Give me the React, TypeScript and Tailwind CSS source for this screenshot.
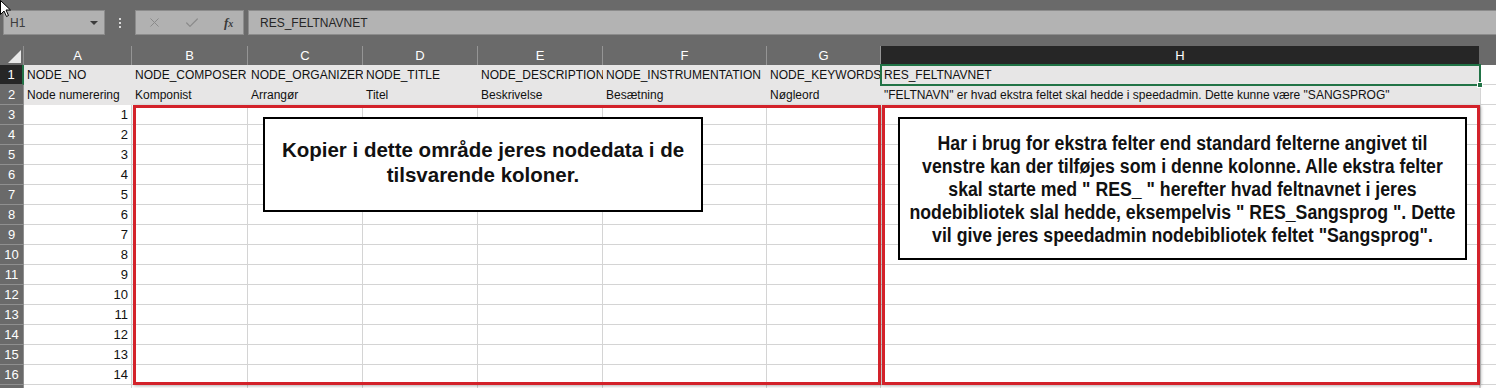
import { X, Check } from "lucide-react";

const cols = [
  { key: "A", w: "w-[108px]" },
  { key: "B", w: "w-[116px]" },
  { key: "C", w: "w-[115px]" },
  { key: "D", w: "w-[115px]" },
  { key: "E", w: "w-[125px]" },
  { key: "F", w: "w-[164px]" },
  { key: "G", w: "w-[114px]" },
  { key: "H", w: "w-[599px]" },
];

const row1 = [
  "NODE_NO",
  "NODE_COMPOSER",
  "NODE_ORGANIZER",
  "NODE_TITLE",
  "NODE_DESCRIPTION",
  "NODE_INSTRUMENTATION",
  "NODE_KEYWORDS",
  "RES_FELTNAVNET",
];

const row2 = [
  "Node numerering",
  "Komponist",
  "Arrangør",
  "Titel",
  "Beskrivelse",
  "Besætning",
  "Nøgleord",
  '"FELTNAVN" er hvad ekstra feltet skal hedde i speedadmin. Dette kunne være "SANGSPROG"',
];

const note = [
  "Har i brug for ekstra felter end standard felterne angivet til",
  "venstre kan der tilføjes som i denne kolonne. Alle ekstra felter",
  'skal starte med " RES_ " herefter hvad feltnavnet i jeres',
  'nodebibliotek slal hedde, eksempelvis " RES_Sangsprog ". Dette',
  'vil give jeres speedadmin nodebibliotek feltet "Sangsprog".',
];

function Toolbar() {
  return (
    <div className="flex h-[46px] items-start bg-[#6a6a6a] pt-[10px]">
      <div className="ml-[3px] flex h-[25px] w-[102px] items-center justify-between border border-[#8c8c8c] bg-[#b1b1b1] pl-[6px] pr-[6px] text-[12px] text-[#3c3c3c]">
        <span>H1</span>
        <span className="h-0 w-0 border-x-[4px] border-t-[4px] border-x-transparent border-t-[#3c3c3c]" />
      </div>
      <div className="flex h-[25px] w-[30px] flex-col items-center justify-center gap-[2px]">
        <span className="h-[2px] w-[2px] bg-[#d9d9d9]" />
        <span className="h-[2px] w-[2px] bg-[#d9d9d9]" />
        <span className="h-[2px] w-[2px] bg-[#d9d9d9]" />
      </div>
      <div className="flex h-[25px] w-[109px] items-center border border-[#8c8c8c] bg-[#b1b1b1] pl-[11px]">
        <X size={15} strokeWidth={1.6} className="text-[#8a8a8a]" />
        <Check size={16} strokeWidth={1.8} className="ml-[22px] text-[#8a8a8a]" />
        <span className="ml-[24px] font-['Liberation_Serif',serif] text-[13px] font-bold italic text-[#3a3a3a]">
          f<span className="text-[10px]">x</span>
        </span>
      </div>
      <div className="ml-[4px] flex h-[25px] flex-1 items-center border-y border-l border-[#8c8c8c] bg-[#b3b3b3] pl-[11px] text-[12px] text-[#262626]">
        RES_FELTNAVNET
      </div>
    </div>
  );
}

function Sheet() {
  const rows = Array.from({ length: 17 }, (_, i) => i + 1);
  return (
    <div className="relative">
      {/* column headers */}
      <div className="flex h-[19px] text-[13px] text-white">
        <div className="relative w-[24px] shrink-0 border-r border-[#8f8f8f] bg-[#6a6a6a]">
          <span className="absolute bottom-[2px] right-[2px] h-0 w-0 border-b-[13px] border-l-[13px] border-l-transparent border-b-[#e8e8e8]" />
        </div>
        {cols.map((c) => (
          <div
            key={c.key}
            className={`${c.w} flex shrink-0 items-center justify-center border-r ${
              c.key === "H" ? "border-[#6a6a6a] bg-[#262626]" : "border-[#959595] bg-[#6a6a6a]"
            }`}
          >
            {c.key}
          </div>
        ))}
        <div className="flex-1 bg-[#6a6a6a]" />
      </div>

      {rows.map((r) => (
        <div key={r} className="flex h-[20px] text-[12px] text-[#111]">
          <div
            className={`flex w-[24px] shrink-0 items-center justify-center border-b text-[13px] text-white ${
              r === 1
                ? "border-r-2 border-b-[#6a6a6a] border-r-[#217346] bg-[#262626]"
                : "border-r border-[#8f8f8f] bg-[#6a6a6a]"
            }`}
          >
            {r < 17 ? r : ""}
          </div>
          {cols.map((c, ci) => {
            if (r <= 2) {
              const txt = r === 1 ? row1[ci] : row2[ci];
              return (
                <div
                  key={c.key}
                  className={`${c.w} flex shrink-0 items-center overflow-hidden whitespace-nowrap bg-[#e7e6e6] pl-[3px]`}
                >
                  {txt}
                </div>
              );
            }
            return (
              <div
                key={c.key}
                className={`${c.w} flex shrink-0 items-center justify-end border-b border-r border-[#d4d4d4] bg-white pr-[3px] text-[13px]`}
              >
                {ci === 0 && r < 17 ? r - 2 : ""}
              </div>
            );
          })}
          <div className="flex-1 border-b border-l border-[#d4d4d4] bg-white" />
        </div>
      ))}

      {/* selected cell H1 */}
      <div className="absolute left-[880px] top-[18px] h-[22px] w-[601px] border-2 border-[#217346]">
        <span className="absolute -bottom-[4px] -right-[4px] h-[6px] w-[6px] border border-white bg-[#217346]" />
      </div>

      {/* red frames */}
      <div className="absolute left-[133px] top-[59px] h-[280px] w-[748px] border-[3px] border-[#d3222a] shadow-[1px_1px_3px_rgba(0,0,0,0.3)]" />
      <div className="absolute left-[882px] top-[59px] h-[280px] w-[598px] border-[3px] border-[#d3222a] shadow-[1px_1px_3px_rgba(0,0,0,0.3)]" />

      {/* text boxes */}
      <div className="absolute left-[263px] top-[71px] flex h-[95px] w-[440px] flex-col items-center justify-center border-2 border-black bg-white pb-[5px] text-center text-[20.5px] leading-[25px] font-bold whitespace-nowrap text-[#111]">
        <span>Kopier i dette område jeres nodedata i de</span>
        <span>tilsvarende koloner.</span>
      </div>
      <div className="absolute left-[898px] top-[71px] flex h-[143px] w-[569px] items-center justify-center overflow-hidden border-2 border-black bg-white pt-[1px]">
        <div className="flex scale-x-[0.885] flex-col items-center text-center text-[20px] leading-[23px] font-bold whitespace-nowrap text-[#111]">
          {note.map((l) => (
            <span key={l}>{l}</span>
          ))}
        </div>
      </div>
    </div>
  );
}

export default function App() {
  return (
    <div className="relative h-[388px] w-[1496px] overflow-hidden bg-[#6a6a6a] font-['Liberation_Sans',Arial,sans-serif]">
      <Toolbar />
      <Sheet />
      {/* mouse pointer */}
      <svg className="absolute left-0 top-0" width="12" height="18" viewBox="0 0 12 18">
        <path d="M0.5 0.5 L0.5 14.5 L4 11 L6.5 16.5 L8.5 15.5 L6 10 L10.5 10 Z" fill="white" stroke="black" strokeWidth="1" />
      </svg>
    </div>
  );
}
